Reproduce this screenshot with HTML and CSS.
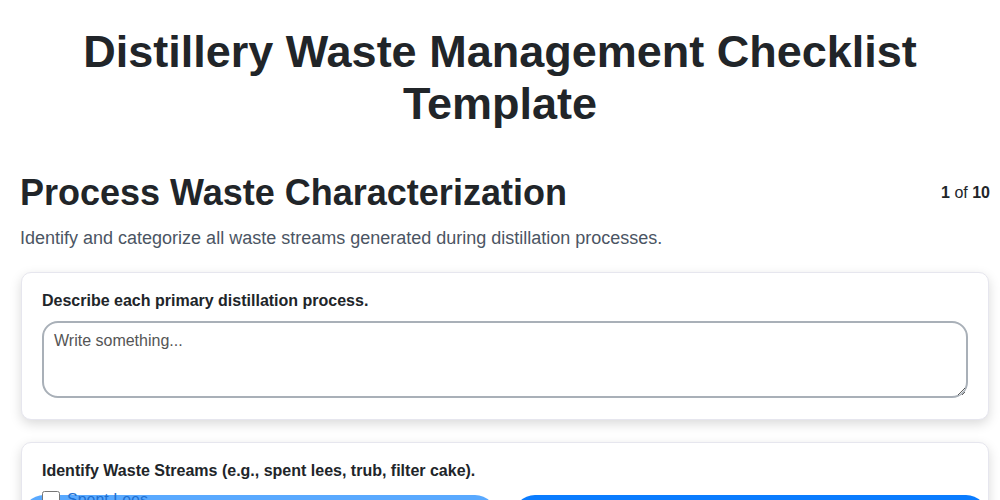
FILE: index.html
```html
<!DOCTYPE html>
<html>
<head>
  <title>Distillery Waste Management Checklist Template</title>
  <link rel="stylesheet" href="styles.css">
</head>
<body>
  <div class="page">
    <h1 class="doc-title">Distillery Waste Management Checklist Template</h1>

    <div class="step-header">
      <h2>Process Waste Characterization</h2>
      <div class="step-count"><b>1</b> of <b>10</b></div>
    </div>
    <p class="step-desc">Identify and categorize all waste streams generated during distillation processes.</p>

    <div class="card">
      <label class="question" for="processes">Describe each primary distillation process.</label>
      <textarea id="processes" placeholder="Write something..."></textarea>
    </div>

    <div class="card">
      <div class="question">Identify Waste Streams (e.g., spent lees, trub, filter cake).</div>
      <div class="options">
        <div class="option light">
          <label><input type="checkbox"> Spent Lees</label>
        </div>
        <div class="option dark">
          <label class="below"><input type="checkbox"> Trub</label>
        </div>
      </div>
    </div>
  </div>
</body>
</html>
```

FILE: styles.css
```css
body {
  margin: 0;
  font-family: 'Liberation Sans', Arial, sans-serif;
  color: #212529;
  background: #fff;
}

.page {
  padding: 0 10px 0 20px;
}

.doc-title {
  font-size: 45px;
  font-weight: 700;
  text-align: center;
  margin: 26px 0 42px -10px;
}

.step-header {
  display: flex;
  justify-content: space-between;
  align-items: center;
}

.step-header h2 {
  font-size: 36px;
  font-weight: 700;
  margin: 0;
}

.step-count {
  font-size: 16px;
}

.step-desc {
  font-size: 18px;
  color: #4b5563;
  margin: 14px 0 23px;
}

.card {
  background: #fff;
  border: 1px solid #e6e6ee;
  border-radius: 10px;
  box-shadow: 0 4px 12px rgba(0, 0, 0, 0.15);
  padding: 19px 20px 21px;
  margin: 0 1px 22px;
}

.question {
  display: block;
  font-size: 16px;
  font-weight: 700;
  margin-bottom: 11px;
}

textarea {
  display: block;
  box-sizing: border-box;
  width: 100%;
  height: 77px;
  border: 2px solid #a9b0b8;
  border-radius: 16px;
  padding: 9px 10px;
  font-family: 'Liberation Sans', Arial, sans-serif;
  font-size: 16px;
  resize: vertical;
}

textarea::placeholder {
  color: #555;
}

.options {
  display: grid;
  grid-template-columns: 1fr 1fr;
  gap: 16px;
  margin: 15px -20px 0;
}

.option {
  border-radius: 22px;
  height: 48px;
  padding: 0 20px;
}

.option.light {
  background: #59a9ff;
}

.option.dark {
  background: #0a7cff;
}

.option label {
  display: flex;
  align-items: center;
  gap: 7px;
  margin-top: -4px;
  font-size: 16px;
  color: #1f6fd0;
}

.option label.below {
  margin-top: 14px;
  color: #fff;
}

.option input[type="checkbox"] {
  margin: 0;
  width: 18px;
  height: 18px;
}
```
